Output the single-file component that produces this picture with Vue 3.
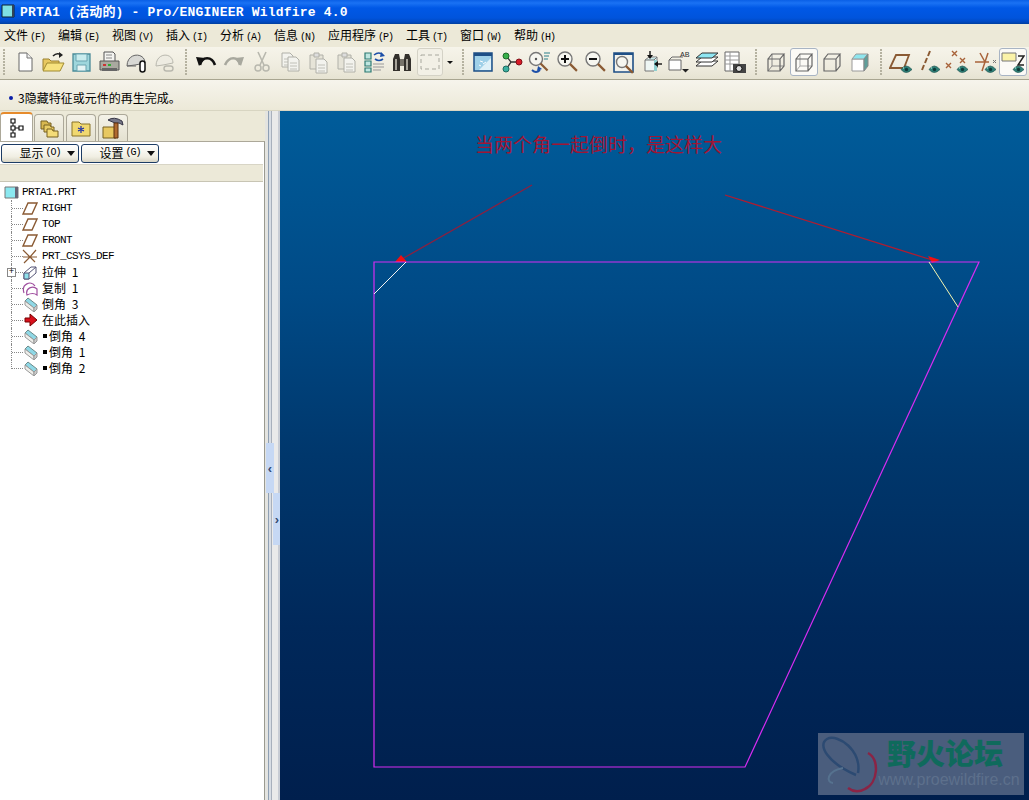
<script setup>
const menus = [
  { name: '文件', key: '(F)' },
  { name: '编辑', key: '(E)' },
  { name: '视图', key: '(V)' },
  { name: '插入', key: '(I)' },
  { name: '分析', key: '(A)' },
  { name: '信息', key: '(N)' },
  { name: '应用程序', key: '(P)', wide: true },
  { name: '工具', key: '(T)' },
  { name: '窗口', key: '(W)' },
  { name: '帮助', key: '(H)' }
];

const eye = '<path d="M12 19.500q5-7 11 0q-6 6-11 0z" fill="#2f8078" stroke="#1c5550" stroke-width=".7"/><circle cx="17.500" cy="19.500" r="1.700" fill="#0e3a38"/><path d="M14 18h1" stroke="#bfe"/>';
const cube = (extra) => `<path d="M4 9h12v12H4z M4 9l4-5h12l-4 5 M16 21l4-5V4" fill="none" stroke="#666" stroke-width="1.2"/>${extra}`;
const lens = (cx, cy, r) => `<circle cx="${cx}" cy="${cy}" r="${r}" fill="#f6f6f0" stroke="#777" stroke-width="1.4"/><path d="M${cx + r * 0.7} ${cy + r * 0.7}l7 7" stroke="#8a5a33" stroke-width="2.2"/>`;
const pageDoc = (dx, dy) => `<path d="M${dx} ${dy}h8l3 3v11H${dx}z" fill="#f3f3ee" stroke="#b0b0a8"/><path d="M${dx + 2} ${dy + 6}h7M${dx + 2} ${dy + 9}h7M${dx + 2} ${dy + 12}h7" stroke="#c0c0b8"/>`;

const group1 = [
  '<path d="M6 3h8l5 5v13H6z" fill="#fff" stroke="#666"/><path d="M14 3v5h5" fill="#eee" stroke="#777"/>',
  '<path d="M2 20V9h6l2 2h8v3" fill="#e8c860" stroke="#9a8030"/><path d="M2 21l4-8h17l-4 8z" fill="#f7e27e" stroke="#a08a30"/><path d="M12 6q4-4 8-1" fill="none" stroke="#222" stroke-width="1.6"/><path d="M18 2l4 3-4 3z" fill="#222"/>',
  '<path d="M4 4h17v17H4z" fill="#9ed6dc" stroke="#4a8a98" stroke-width="1.3"/><path d="M7 4h11v7H7z" fill="#c9ecee" stroke="#6aa4b0"/><path d="M8 15h9v6H8z" fill="#e6f4f4" stroke="#6aa4b0"/>',
  '<path d="M7 2h9l2 2v8H7z" fill="#f4f4f0" stroke="#555"/><path d="M9 5h6M9 8h6" stroke="#888"/><path d="M3 11h19v9H3z" fill="#a9a99f" stroke="#555"/><path d="M5 18h15v3H5z" fill="#666"/><path d="M6 14h3v2H6z" fill="#c33"/><path d="M11 14h3v2h-3z" fill="#3a3"/>',
  '<path d="M2 16C2 2 20 2 20 13L10 15z" fill="#d8d8d4" stroke="#666"/><path d="M2 16h9" stroke="#666"/><rect x="15" y="11" width="5" height="11" rx="2.500" fill="#fff" stroke="#111" stroke-width="1.500"/>',
  '<path d="M3 16C3 2 20 2 20 13L10 15z" fill="#eeece2" stroke="#b9b8ae"/><rect x="11" y="16" width="9" height="5" rx="2.500" fill="none" stroke="#b9b8ae" stroke-width="1.400"/>'
];
const group2 = [
  '<path d="M6 15C8 6 18 6 21 15" fill="none" stroke="#111" stroke-width="2.600"/><path d="M2 7l9 1-6 8z" fill="#111"/>',
  '<path d="M18 15C16 6 7 6 3 15" fill="none" stroke="#a8a89e" stroke-width="2.600"/><path d="M22 7l-9 1 6 8z" fill="#a8a89e"/>',
  '<path d="M8 2l6 13M16 2l-6 13" stroke="#b8b8ae" stroke-width="1.600"/><circle cx="8" cy="18" r="3" fill="none" stroke="#b8b8ae" stroke-width="1.500"/><circle cx="16" cy="18" r="3" fill="none" stroke="#b8b8ae" stroke-width="1.500"/>',
  pageDoc(4, 3) + pageDoc(10, 7),
  '<path d="M4 5h13v14H4z" fill="#e6e4d8" stroke="#b0b0a8"/><path d="M8 3h5v4H8z" fill="#ddd" stroke="#b0b0a8"/>' + pageDoc(10, 9),
  '<path d="M4 5h13v14H4z" fill="#e6e4d8" stroke="#b0b0a8"/><path d="M8 3h5v4H8z" fill="#ddd" stroke="#b0b0a8"/>' + pageDoc(10, 8),
  '<path d="M3 3h6v6H3zM3 11h6v5H3zM3 18h6v4H3z" fill="#bfe6e0" stroke="#2d7a72" stroke-width="1.200"/><path d="M11 14h11M11 17h11M11 20h8" stroke="#999"/><path d="M12 5q5-4 9 0" fill="none" stroke="#1c4fa8" stroke-width="1.600"/><path d="M19 2l4 4-5 1z" fill="#1c4fa8"/><path d="M21 9q-4 3-8 0" fill="none" stroke="#1c4fa8" stroke-width="1.600"/>',
  '<path d="M3 9l2-5h4l1 5v12H3zM14 9l1-5h4l2 5v12h-7z" fill="#33302c"/><path d="M10 9h4v7h-4z" fill="#77736a"/><path d="M5 9h2v11H5zM16 9h2v11h-2z" fill="#a8a49a"/>'
];
const group3 = [
  '<path d="M3 3h18v18H3z" fill="#9fd0e8" stroke="#1e4f86" stroke-width="1.500"/><path d="M3 3h18v3H3z" fill="#1e4f86"/><path d="M8 20l12-12v12z" fill="#dff1f8"/><path d="M9 11l3 1M12 14l3-2M8 15l2 1" stroke="#fff"/>',
  '<path d="M8 7l4 5-4 6M12 12h8" fill="none" stroke="#333" stroke-width="1.300"/><circle cx="7" cy="6" r="3" fill="#38b04a" stroke="#1e6a2a"/><circle cx="7" cy="19" r="3" fill="#3cb0a0" stroke="#1e6a60"/><circle cx="20" cy="12" r="3" fill="#d81c28" stroke="#801018"/>',
  lens(9, 9, 6.5) + '<circle cx="9" cy="9" r="1.200" fill="#555"/><path d="M17 3h6M17 6h5M17 9h4" stroke="#2a7f8a"/><path d="M5 20q4 4 8 0" fill="none" stroke="#1c4fa8" stroke-width="1.800"/><path d="M11 16l4 3-5 2z" fill="#1c4fa8"/>',
  lens(10, 9, 7) + '<path d="M6 9h8M10 5v8" stroke="#111" stroke-width="2"/>',
  lens(10, 9, 7) + '<path d="M6 9h8" stroke="#111" stroke-width="2"/>',
  '<path d="M3 3h19v19H3z" fill="#f2f2ec" stroke="#1e4f86" stroke-width="1.600"/><path d="M3 3h19v2H3z" fill="#1e4f86"/>' + lens(11, 12, 5.5),
  '<path d="M6 10l4-3h8v11l-3 3H6z" fill="#eef6f4" stroke="#777"/><path d="M15 10h3v11h-3z" fill="#8fd0d0"/><path d="M6 10h9l3-3" fill="#bfe6e6" stroke="#777"/><path d="M11 1v6" stroke="#111" stroke-width="1.400"/><path d="M8 5h6l-3 4z" fill="#111"/><path d="M23 14h-5" stroke="#111" stroke-width="1.400"/><path d="M19 11v6l-4-3z" fill="#111"/>',
  '<path d="M2 10h12v10H2z" fill="#fff" stroke="#666"/><path d="M2 10l3-3h11" fill="none" stroke="#666"/><text x="13" y="7" font-size="8" font-family="Liberation Mono, monospace" fill="#333">AB</text><path d="M15 19h7l-3.500 3.500z" fill="#222"/>',
  '<path d="M1 16l6-5h16l-6 5z" fill="#fff" stroke="#333"/><path d="M1 12l6-5h16l-6 5z" fill="#fff" stroke="#333"/><path d="M1 8l6-5h16l-6 5z" fill="#8fe6f2" stroke="#333"/>',
  '<path d="M2 2h14v19H2z" fill="#fff" stroke="#666"/><path d="M2 6h14M2 10h14M2 14h14M7 2v19" stroke="#999"/><path d="M10 14h13v9H10z" fill="#444"/><circle cx="16" cy="18.500" r="3" fill="#ddd" stroke="#111"/>'
];
const group4 = [
  '<path d="M4 21l4-5h12 M8 16V4" fill="none" stroke="#888" stroke-width="1"/>' + cube(''),
  '<path d="M4 21l4-5h12 M8 16V4" fill="none" stroke="#aaa" stroke-width="1"/>' + cube(''),
  cube(''),
  '<path d="M4 9h12v12H4z" fill="#fff" stroke="#999"/><path d="M4 9l4-5h12l-4 5z" fill="#8fe6ee" stroke="#999"/><path d="M16 9l4-5v12l-4 5z" fill="#5f9f9a" stroke="#888"/>'
];
const group5 = [
  '<path d="M1 18L7 5h13l-5 13z" fill="none" stroke="#8a5a33" stroke-width="1.800"/>' + eye,
  '<path d="M13 1l-2 5M10 8l-2 5M7 15l-2 5" stroke="#8a5a33" stroke-width="2"/>' + eye,
  '<path d="M7 1l5 5M12 1L7 6M15 8l5 5M20 8l-5 5M1 13l5 5M6 13l-5 5" stroke="#a8633a" stroke-width="1.400"/>' + eye,
  '<path d="M7 3l5 9 3-9M12 12L9 21M2 12h14" fill="none" stroke="#a8633a" stroke-width="1.500"/><path d="M20 10l3 3M23 10l-3 3" stroke="#777"/>' + eye,
  '<path d="M1 3h14v8H1z" fill="#fbf3a8" stroke="#777"/><path d="M17 6h6l-6 9h6" fill="none" stroke="#222" stroke-width="1.500"/>' + eye
];
const buttons = (list, active = -1) => list.map((svg, i) => ({ svg, on: i === active }));

const toolbar = [
  buttons(group1),
  buttons(group2),
  buttons(group3),
  buttons(group4, 1),
  buttons(group5, 4)
];

const plane = '<path d="M1 14L6 3h9l-5 11z" fill="#fff" stroke="#8a5a33" stroke-width="1.400"/>';
const chamfer = '<path d="M6 2l9 7-3 3-9-7z" fill="#8fd8e6" stroke="#6a8a8a"/><path d="M3 5v4l9 7v-4z" fill="#eeeeea" stroke="#999"/><path d="M12 12l3-3v4l-3 3z" fill="#ccc" stroke="#999"/>';
const tree = [
  { text: 'RIGHT', mono: true, icon: plane },
  { text: 'TOP', mono: true, icon: plane },
  { text: 'FRONT', mono: true, icon: plane },
  { text: 'PRT_CSYS_DEF', mono: true, icon: '<path d="M1 2l7 7 6-7M8 9l-6 6M8 9l5 5M1 9h14" fill="none" stroke="#8a5a33" stroke-width="1.200"/>' },
  { text: '拉伸 1', plus: true, icon: '<path d="M2 9l7-6h5v6l-7 6H2z" fill="#fff" stroke="#557"/><path d="M2 9h5v6H2z" fill="#8fe0ea" stroke="#557"/><path d="M7 9l7-6" stroke="#557"/>' },
  { text: '复制 1', icon: '<path d="M2 13C-1 4 9 0 13 6" fill="none" stroke="#a050a0" stroke-width="1.200"/><path d="M5 15C3 8 11 5 15 9v6q-4-3-10 0z" fill="#fff" stroke="#a050a0" stroke-width="1.200"/>' },
  { text: '倒角 3', icon: chamfer },
  { text: '在此插入', icon: '<path d="M3 6h5V2l7 6-7 6v-4H3z" fill="#d8101c" stroke="#700"/>' },
  { text: '倒角 4', mark: true, icon: chamfer },
  { text: '倒角 1', mark: true, icon: chamfer },
  { text: '倒角 2', mark: true, last: true, icon: chamfer }
];
</script>

<template>
  <div class="window">
    <div class="titlebar">
      <svg class="app-icon" width="15" height="15" viewBox="0 0 15 15"><path d="M1 2h12v12H1z" fill="#7fe0e4" stroke="#123"/><path d="M11 2h2v12h-2z" fill="#345"/></svg>
      <span class="title">PRTA1 (活动的) - Pro/ENGINEER Wildfire 4.0</span>
    </div>

    <div class="menubar">
      <div v-for="m in menus" :key="m.key" class="menu" :class="{ wide: m.wide }">
        {{ m.name }}<span class="hotkey">{{ m.key }}</span>
      </div>
    </div>

    <div class="toolbar">
      <template v-for="(group, g) in toolbar" :key="g">
        <div class="sep" :class="{ first: g === 0 }"></div>
        <div v-for="(b, i) in group" :key="i" class="tool" :class="{ on: b.on }">
          <svg width="24" height="24" viewBox="0 0 24 24" v-html="b.svg"></svg>
        </div>
        <template v-if="g === 1">
          <div class="tool on dim">
            <svg width="24" height="24" viewBox="0 0 24 24"><path d="M3 5h18v14H3z" fill="none" stroke="#a8a89e" stroke-dasharray="4 3"/></svg>
          </div>
          <div class="drop"></div>
        </template>
      </template>
    </div>

    <div class="message">
      <span class="dot"></span>
      <span>3隐藏特征或元件的再生完成。</span>
    </div>

    <div class="main">
      <aside class="side">
        <div class="tabs">
          <div class="tab active">
            <svg width="18" height="20" viewBox="0 0 18 20"><path d="M3 1h4v4H3zM3 8h4v4H3zM3 15h4v4H3zM11 8h4v4h-4z" fill="#fff" stroke="#111" stroke-width="1.200"/><path d="M5 5v3M5 12v3M7 10h4" stroke="#111"/></svg>
          </div>
          <div class="tab">
            <svg width="20" height="20" viewBox="0 0 20 20"><path d="M2 3h6l1 2h3v6H2z" fill="#d8b850" stroke="#776020"/><path d="M5 7h6l1 2h3v5H5z" fill="#e8cc64" stroke="#776020"/><path d="M8 11h5l1 2h5v6H8z" fill="#f4dc78" stroke="#776020"/></svg>
          </div>
          <div class="tab">
            <svg width="20" height="20" viewBox="0 0 20 20"><path d="M1 4h7l2 2h9v12H1z" fill="#f0d870" stroke="#8a7428"/><path d="M10 8v7M7 10l6 3M13 10l-6 3" stroke="#1c2fa8" stroke-width="1.200"/></svg>
          </div>
          <div class="tab">
            <svg width="24" height="24" viewBox="0 0 24 24"><path d="M2 11h13v11H2z" fill="#e8c860" stroke="#776020"/><path d="M7 4q6-4 14 1l1 4q-4-3-8-2z" fill="#778" stroke="#334"/><path d="M13 7h4v15h-4z" fill="#b06a30" stroke="#5a3010"/></svg>
          </div>
        </div>

        <div class="panel">
          <div class="panel-btns">
            <button class="pbtn">显示 <span class="hotkey">(O)</span><i class="caret"></i></button>
            <button class="pbtn">设置 <span class="hotkey">(G)</span><i class="caret"></i></button>
          </div>
          <div class="greybar"></div>
          <div class="tree">
            <div class="root">
              <svg width="15" height="14" viewBox="0 0 15 14"><path d="M1 2h13v11H1z" fill="#8be8f0" stroke="#777"/><path d="M11 2h3v11h-3z" fill="#667"/></svg>
              <span class="mono">PRTA1.PRT</span>
            </div>
            <div v-for="row in tree" :key="row.text" class="row" :class="{ last: row.last }">
              <span class="branch"></span>
              <span v-if="row.plus" class="plus">+</span>
              <svg class="ticon" width="16" height="16" viewBox="0 0 16 16" v-html="row.icon"></svg>
              <span v-if="row.mark" class="mark"></span>
              <span :class="{ mono: row.mono, cjk: !row.mono }">{{ row.text }}</span>
            </div>
          </div>
        </div>
      </aside>

      <div class="sash">
        <span class="handle left"><i class="chev">‹</i></span>
        <span class="handle right"><i class="chev">›</i></span>
      </div>

      <div class="viewport">
        <svg class="canvas" width="749" height="689" viewBox="280 111 749 689">
          <text x="475" y="152" class="note">当两个角一起倒时，是这样大</text>
          <path d="M532 185L402 259" stroke="#8a2040" stroke-width="1.300" fill="none"/>
          <path d="M725 195L932 260" stroke="#b01c30" stroke-width="1.300" fill="none"/>
          <path d="M395 262l6-7 6 7z" fill="#f01010"/>
          <path d="M928 256l12 4-8 3z" fill="#f01010"/>
          <path d="M374 262H979L745 767H374Z" fill="none" stroke="#d62cf2" stroke-width="1.200"/>
          <path d="M374 294L406 262" stroke="#f4f4f4" stroke-width="1" fill="none"/>
          <path d="M929 262L958 307" stroke="#f4f4b0" stroke-width="1" fill="none"/>
        </svg>

        <div class="mark-logo">
          <svg class="swirl" width="66" height="62" viewBox="0 0 66 62">
            <path d="M40 40C44 18 20 0 9 6C-1 12 10 30 38 42" fill="none" stroke="#2c4a72" stroke-width="2.500"/>
            <path d="M50 20C62 26 60 50 47 56C40 60 34 58 30 55" fill="none" stroke="#8a2445" stroke-width="2.500"/>
            <path d="M25 35C8 38 8 50 15 50" fill="none" stroke="#56728f" stroke-width="2"/>
          </svg>
          <div class="mark-text">
            <div class="mark-cn">野火论坛</div>
            <div class="mark-url">www.proewildfire.cn</div>
          </div>
        </div>
      </div>
    </div>
  </div>
</template>

<style scoped>
.window {
  width: 1029px;
  height: 800px;
  display: flex;
  flex-direction: column;
  overflow: hidden;
  background: #ece9d8;
  font-family: "Noto Sans CJK SC", "Liberation Sans", sans-serif;
  font-size: 12px;
  color: #000;
}

.titlebar {
  height: 24px;
  flex: none;
  display: flex;
  align-items: center;
  gap: 4px;
  padding-left: 1px;
  padding-bottom: 3px;
  box-sizing: border-box;
  background: linear-gradient(#0a5fe6 0, #1a72f4 3px, #0058e6 8px, #0054dc 18px, #0048c0 22px, #003f9c 24px);
}

.title {
  font-family: "Liberation Mono", "Noto Sans CJK SC", monospace;
  font-weight: bold;
  font-size: 13px;
  letter-spacing: 0.2px;
  color: #fff;
  white-space: pre;
}

.menubar {
  height: 23px;
  flex: none;
  display: flex;
  align-items: center;
  padding-left: 4px;
  padding-bottom: 3px;
  box-sizing: border-box;
  background: #ece9d8;
}

.menu {
  width: 54px;
  flex: none;
  white-space: nowrap;
}

.menu.wide {
  width: 78px;
}

.hotkey {
  font-family: "Liberation Mono", monospace;
  font-size: 10px;
  letter-spacing: -1px;
  margin-left: 2px;
}

.toolbar {
  height: 33px;
  flex: none;
  display: flex;
  align-items: center;
  padding-bottom: 2px;
  background: linear-gradient(#f6f4ea, #efecdf 60%, #e6e3d2);
  border-bottom: 1px solid #a8a590;
  box-sizing: border-box;
}

.sep {
  width: 13px;
  height: 26px;
  flex: none;
  background: linear-gradient(#b5b2a0, #b5b2a0) center / 2px 100% no-repeat;
  -webkit-mask: repeating-linear-gradient(#000 0 2px, transparent 2px 3px);
  mask: repeating-linear-gradient(#000 0 2px, transparent 2px 3px);
}

.sep.first {
  width: 11px;
  background-position: 3px 0;
}

.tool {
  width: 28px;
  height: 28px;
  flex: none;
  display: flex;
  align-items: center;
  justify-content: center;
  box-sizing: border-box;
}

.tool.on {
  background: #fbfaf6;
  border: 1px solid #a8b4c4;
  border-radius: 3px;
}

.tool.dim {
  width: 26px;
  margin-left: 1px;
  background: #f2f0e6;
  border-color: #d4d2c6;
}

.drop {
  width: 13px;
  flex: none;
  display: flex;
  justify-content: center;
}

.drop::after {
  content: "";
  border: 3px solid transparent;
  border-top: 3px solid #111;
  margin-top: 3px;
}

.message {
  height: 31px;
  flex: none;
  display: flex;
  align-items: center;
  padding-left: 9px;
  gap: 5px;
  background: linear-gradient(#f6f4ec, #ece9d8);
  box-sizing: border-box;
  padding-top: 5px;
  border-bottom: 1px solid #d8d5c2;
}

.dot {
  width: 4px;
  height: 4px;
  border-radius: 50%;
  background: #0a1ea8;
}

.main {
  flex: 1;
  min-height: 0;
  display: flex;
}

.side {
  width: 265px;
  flex: none;
  display: flex;
  flex-direction: column;
}

.tabs {
  height: 30px;
  flex: none;
  display: flex;
  align-items: flex-end;
  gap: 2px;
  padding-top: 2px;
  box-sizing: border-box;
}

.tab {
  width: 30px;
  height: 27px;
  display: flex;
  align-items: center;
  justify-content: center;
  box-sizing: border-box;
  border: 1px solid #aca899;
  border-bottom: none;
  border-radius: 4px 4px 0 0;
  background: linear-gradient(#f4f2e8, #e4e1d0);
}

.tab.active {
  width: 33px;
  height: 29px;
  background: #fff;
  border-top: 2px solid #e68b2c;
  margin-right: -1px;
}

.panel {
  flex: 1;
  min-height: 0;
  background: #fff;
  border-top: 1px solid #aca899;
  border-right: 1px solid #9a9a90;
  display: flex;
  flex-direction: column;
}

.panel-btns {
  display: flex;
  gap: 2px;
  padding: 2px 0 0 1px;
}

.pbtn {
  width: 78px;
  height: 19px;
  padding: 0 0 2px 14px;
  box-sizing: border-box;
  display: flex;
  align-items: center;
  justify-content: center;
  border: 1px solid #1c3c64;
  border-radius: 3px;
  background: linear-gradient(#fff, #f0eee2 70%, #d8d5c4);
  font-family: "Noto Sans CJK SC", sans-serif;
  font-size: 12px;
  color: #000;
}

.caret {
  border: 4px solid transparent;
  border-top: 5px solid #111;
  border-bottom: none;
  margin: 2px 0 0 6px;
}

.greybar {
  height: 18px;
  margin: 1px 1px 0 0;
  flex: none;
  background: #ece9d8;
  border-top: 1px solid #d8d5c6;
  border-bottom: 1px solid #c8c5b4;
  box-sizing: border-box;
}

.tree {
  padding-top: 2px;
  line-height: 16px;
}

.mono {
  font-family: "Liberation Mono", monospace;
  font-size: 11px;
  letter-spacing: -0.6px;
  white-space: pre;
}

.cjk {
  white-space: pre;
  word-spacing: 3px;
}

.root {
  height: 16px;
  display: flex;
  align-items: center;
  gap: 3px;
  padding-left: 4px;
}

.row {
  height: 16px;
  display: flex;
  align-items: center;
  padding-left: 11px;
  position: relative;
}

.branch {
  width: 11px;
  height: 16px;
  flex: none;
  box-sizing: border-box;
  border-left: 1px dotted #888;
  position: relative;
}

.branch::after {
  content: "";
  position: absolute;
  left: 0;
  top: 8px;
  width: 11px;
  border-top: 1px dotted #888;
}

.row.last .branch {
  height: 9px;
  align-self: flex-start;
}

.plus {
  position: absolute;
  left: 7px;
  top: 4px;
  width: 9px;
  height: 9px;
  box-sizing: border-box;
  border: 1px solid #888;
  background: #fff;
  font: 9px/7px "Liberation Mono", monospace;
  text-align: center;
}

.ticon {
  margin-right: 4px;
  flex: none;
}

.mark {
  width: 4px;
  height: 4px;
  background: #000;
  margin: 0 2px 0 1px;
  flex: none;
}

.sash {
  width: 15px;
  flex: none;
  position: relative;
  background: linear-gradient(90deg, #e4e4e0 0 3px, #8fa0b4 3px 4px, #d8dde4 4px 6px, #a8b0bc 6px 7px, #eaeaea 7px 13px, #c8ccd4 13px 15px);
}

.handle {
  position: absolute;
  display: flex;
  align-items: center;
  justify-content: center;
  width: 8px;
  background: #c6d8f4;
}

.handle.left {
  left: 1px;
  top: 332px;
  height: 50px;
}

.handle.right {
  left: 8px;
  top: 382px;
  height: 52px;
}

.chev {
  font: bold 13px "Liberation Sans", sans-serif;
  color: #334a70;
}

.viewport {
  flex: 1;
  position: relative;
  overflow: hidden;
  background: linear-gradient(#005c9a 0, #004a86 27%, #00376c 50%, #00285a 75%, #001f4d 100%);
}

.canvas {
  position: absolute;
  left: 0;
  top: 0;
}

.note {
  font-family: "Noto Sans CJK SC", sans-serif;
  font-size: 19px;
  font-weight: 400;
  fill: #a01534;
}

.mark-logo {
  position: absolute;
  left: 538px;
  top: 622px;
  width: 206px;
  height: 62px;
  display: flex;
  background: #4a5d7d;
}

.swirl {
  flex: none;
}

.mark-text {
  width: 146px;
  margin-left: -8px;
  display: flex;
  flex-direction: column;
  align-items: center;
}

.mark-cn {
  font-family: "Noto Sans CJK SC", sans-serif;
  font-weight: 900;
  font-size: 29px;
  line-height: 36px;
  margin: 1px 8px 0 0;
  color: #0f6a5c;
  white-space: nowrap;
}

.mark-url {
  font-family: "Liberation Sans", sans-serif;
  font-size: 16px;
  line-height: 20px;
  color: #5d708c;
  white-space: nowrap;
}
</style>

<style>
body {
  overflow: hidden;
}
</style>
